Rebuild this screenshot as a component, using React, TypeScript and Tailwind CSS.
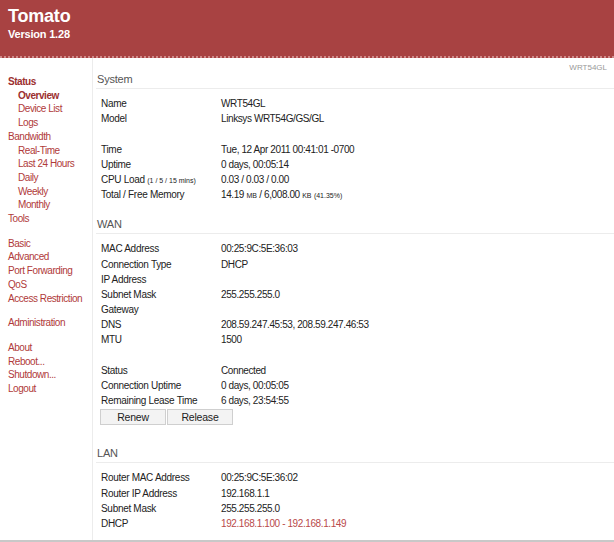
type Row = { label: React.ReactNode; value?: React.ReactNode } | null;

const nav: { label: string; sub?: boolean; bold?: boolean; gap?: boolean }[] = [
    { label: "Status", bold: true },
    { label: "Overview", sub: true, bold: true },
    { label: "Device List", sub: true },
    { label: "Logs", sub: true },
    { label: "Bandwidth" },
    { label: "Real-Time", sub: true },
    { label: "Last 24 Hours", sub: true },
    { label: "Daily", sub: true },
    { label: "Weekly", sub: true },
    { label: "Monthly", sub: true },
    { label: "Tools" },
    { label: "Basic", gap: true },
    { label: "Advanced" },
    { label: "Port Forwarding" },
    { label: "QoS" },
    { label: "Access Restriction" },
    { label: "Administration", gap: true },
    { label: "About", gap: true },
    { label: "Reboot..." },
    { label: "Shutdown..." },
    { label: "Logout" },
];

const small = (t: string) => <span className="text-[7px] tracking-[0px]">{t}</span>;

const system: Row[] = [
    { label: "Name", value: "WRT54GL" },
    { label: "Model", value: "Linksys WRT54G/GS/GL" },
    null,
    { label: "Time", value: "Tue, 12 Apr 2011 00:41:01 -0700" },
    { label: "Uptime", value: "0 days, 00:05:14" },
    { label: <>CPU Load {small("(1 / 5 / 15 mins)")}</>, value: "0.03 / 0.03 / 0.00" },
    {
        label: "Total / Free Memory",
        value: (
            <>
                14.19 {small("MB")} / 6,008.00 {small("KB")} {small("(41.35%)")}
            </>
        ),
    },
];

const wan: Row[] = [
    { label: "MAC Address", value: "00:25:9C:5E:36:03" },
    { label: "Connection Type", value: "DHCP" },
    { label: "IP Address" },
    { label: "Subnet Mask", value: "255.255.255.0" },
    { label: "Gateway" },
    { label: "DNS", value: "208.59.247.45:53, 208.59.247.46:53" },
    { label: "MTU", value: "1500" },
    null,
    { label: "Status", value: "Connected" },
    { label: "Connection Uptime", value: "0 days, 00:05:05" },
    { label: "Remaining Lease Time", value: "6 days, 23:54:55" },
];

const lan: Row[] = [
    { label: "Router MAC Address", value: "00:25:9C:5E:36:02" },
    { label: "Router IP Address", value: "192.168.1.1" },
    { label: "Subnet Mask", value: "255.255.255.0" },
    { label: "DHCP", value: <span className="text-[#b94a4a]">192.168.1.100 - 192.168.1.149</span> },
];

function Rows({ rows }: { rows: Row[] }) {
    return (
        <div className="pl-[5px] pt-[7px]">
            {rows.map((row, i) =>
                row ? (
                    <div key={i} className="flex h-[15.2px] leading-[15.2px] whitespace-nowrap">
                        <div className="w-[120px] shrink-0">{row.label}</div>
                        <div className="tracking-[-0.4px]">{row.value}</div>
                    </div>
                ) : (
                    <div key={i} className="h-[15.2px]" />
                ),
            )}
        </div>
    );
}

function Section({ title, className, children }: { title: string; className?: string; children: React.ReactNode }) {
    return (
        <div className={className}>
            <div className="h-[20px] border-b border-[#ececec] pl-[1px] text-[11px] leading-[20px] tracking-[-0.2px] text-[#555]">
                {title}
            </div>
            {children}
        </div>
    );
}

function Button({ label }: { label: string }) {
    return (
        <button className="h-[16px] w-[66px] border border-[#cfcfcf] bg-[#f3f3f3] text-[10.5px] leading-[14px] tracking-[-0.2px] text-[#222]">
            {label}
        </button>
    );
}

export default function App() {
    return (
        <div
            className="flex h-[542px] w-[614px] flex-col overflow-hidden bg-white text-[10px] tracking-[-0.3px] text-[#222]"
            style={{ fontFamily: '"Liberation Sans", Arial, sans-serif' }}
        >
            <div className="h-[58px] shrink-0 border-b-2 border-dotted border-[#cf8a8a] bg-[#a84242] pl-[8px] pt-[5px] font-bold tracking-[-0.2px] text-white">
                <div className="text-[18px] leading-[22px]">Tomato</div>
                <div className="text-[11px] leading-[15px]">Version 1.28</div>
            </div>

            <div className="flex min-h-0 flex-1 border-b-2 border-[#c8c8c8]">
                <div className="w-[93px] shrink-0 border-r border-[#ececec] pt-[17px] leading-[13.7px] tracking-[-0.45px]">
                    {nav.map((item) => (
                        <div
                            key={item.label}
                            className={[
                                "whitespace-nowrap",
                                item.sub ? "pl-[18px]" : "pl-[8px]",
                                item.bold ? "font-bold text-[#9c2f2f]" : "text-[#b03a3a]",
                                item.gap ? "mt-[11px]" : "",
                            ].join(" ")}
                        >
                            {item.label}
                        </div>
                    ))}
                </div>

                <div className="min-w-0 flex-1 pl-[3px]">
                    <div className="mt-[4px] h-[12px] pr-[7px] text-right text-[8px] leading-[12px] tracking-[0px] text-[#999]">
                        WRT54GL
                    </div>

                    <Section title="System" className="-mt-[5px]">
                        <Rows rows={system} />
                    </Section>

                    <Section title="WAN" className="mt-[12px]">
                        <Rows rows={wan} />
                        <div className="mt-[1px] flex gap-[1px] pl-[4px]">
                            <Button label="Renew" />
                            <Button label="Release" />
                        </div>
                    </Section>

                    <Section title="LAN" className="mt-[18px]">
                        <Rows rows={lan} />
                    </Section>
                </div>
            </div>
        </div>
    );
}
